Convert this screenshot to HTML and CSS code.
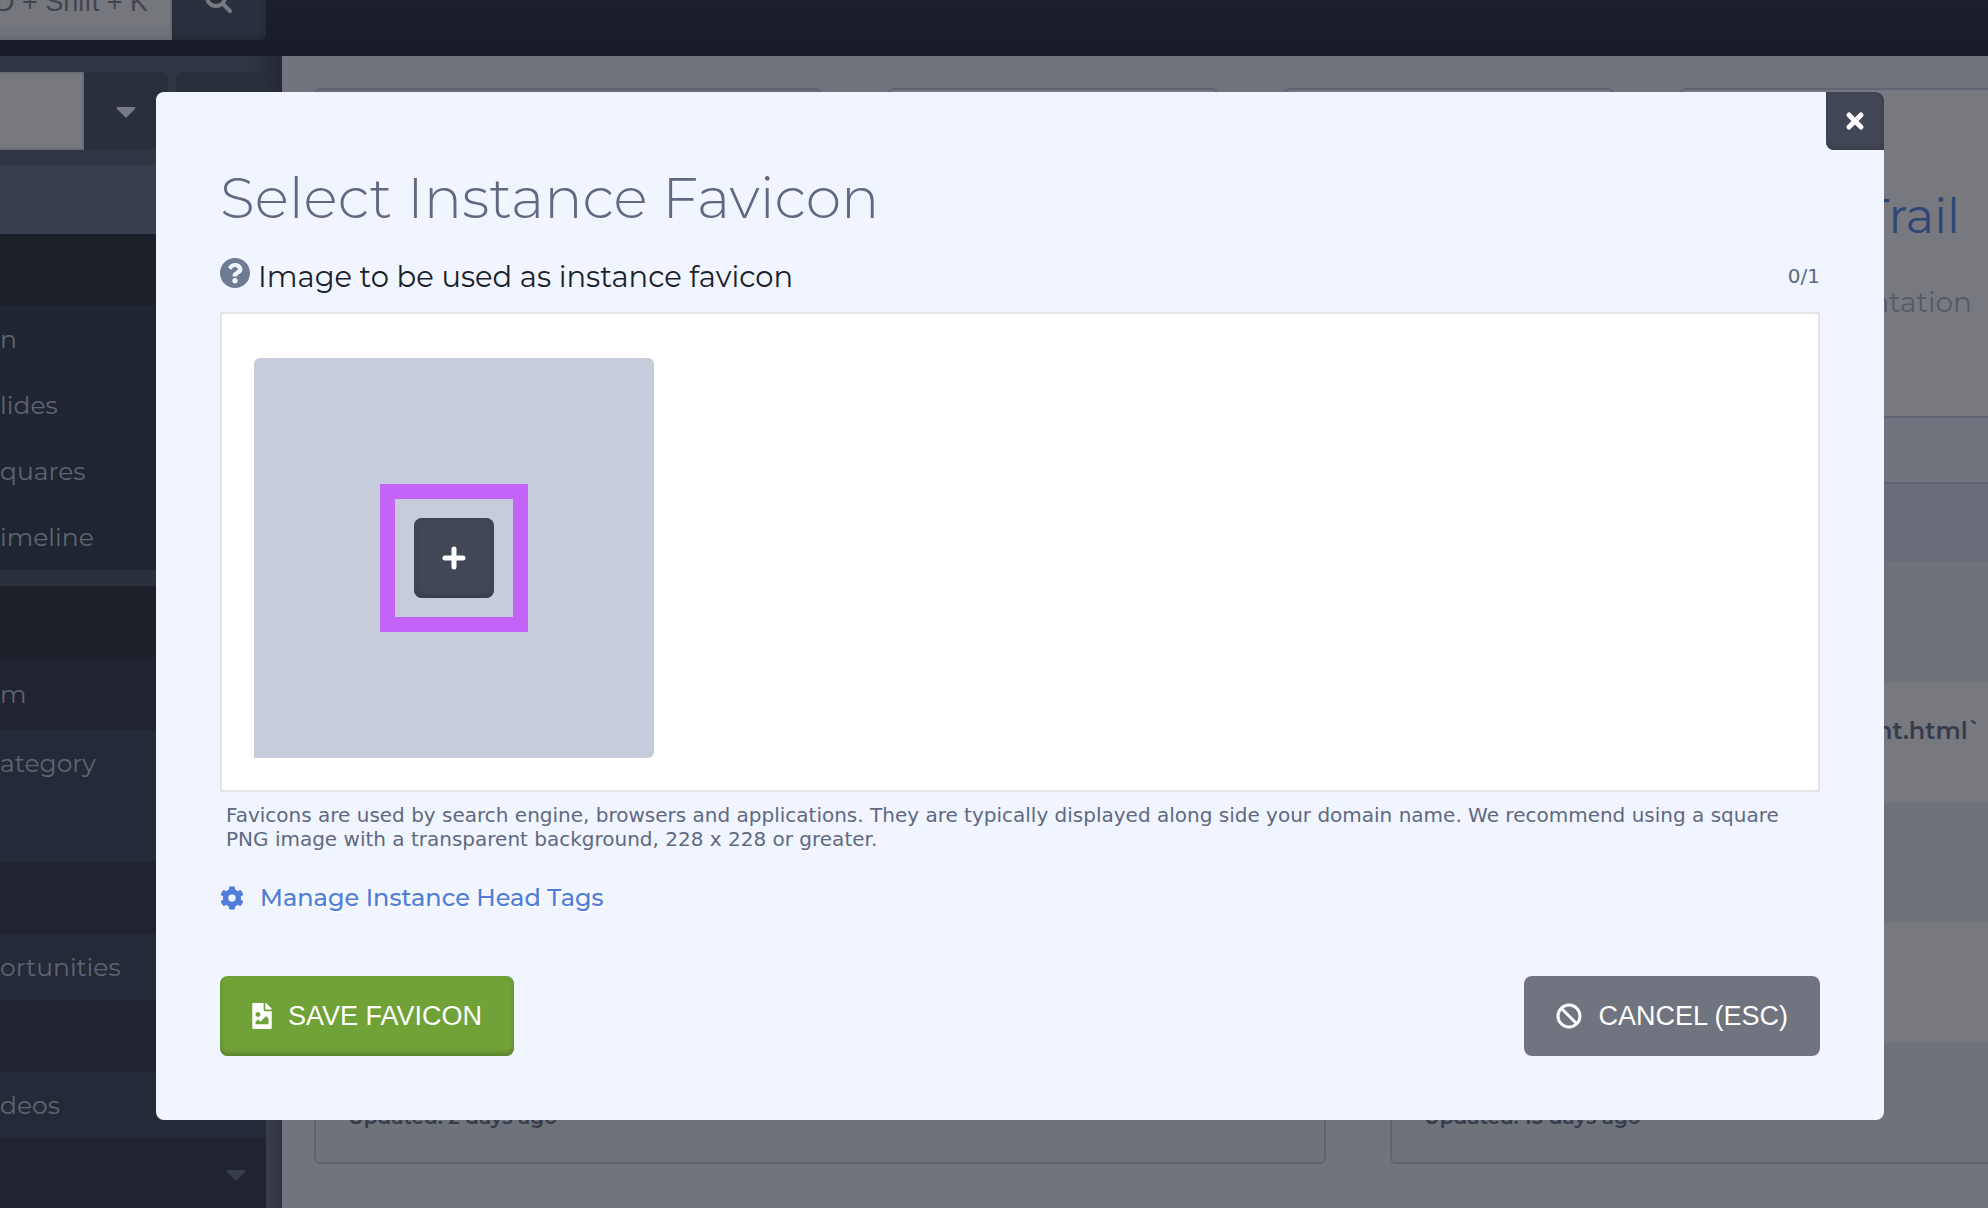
FILE: index.html
```html
<!DOCTYPE html>
<html lang="en">
<head>
<meta charset="utf-8">
<title>Select Instance Favicon</title>
<link rel="stylesheet" href="styles.css">
</head>
<body>
<div class="app">
  <header class="topbar">
    <input class="search" type="text" value="D + Shift + K" aria-label="Search">
    <button class="search-button" type="button" aria-label="Search">
      <svg width="28" height="28" viewBox="0 0 28 28" fill="none" stroke="currentColor" stroke-width="4" stroke-linecap="round"><circle cx="11" cy="11" r="9"/><path d="M18 18l7 7"/></svg>
    </button>
  </header>
  <div class="workspace">
    <nav class="sidebar">
      <div class="filter">
        <input class="filter-input" type="text" aria-label="Filter">
        <button class="filter-toggle" type="button" aria-label="Filter options"><svg width="20" height="12" viewBox="0 0 20 12" fill="currentColor"><path d="M2 0h16q2 0 1 2l-8 8q-1 1-2 0L1 2Q0 0 2 0z"/></svg></button>
        <button class="filter-extra" type="button" aria-label="Add"></button>
      </div>
      <div class="band current"></div>
      <div class="band heading"></div>
      <ul class="menu">
        <li><a href="#">n</a></li>
        <li><a href="#">lides</a></li>
        <li><a href="#">quares</a></li>
        <li><a href="#">imeline</a></li>
      </ul>
      <div class="band divider"></div>
      <div class="band heading"></div>
      <ul class="menu">
        <li class="tall"><a href="#">m</a></li>
        <li class="raised"><a href="#">ategory</a></li>
        <li class="raised"></li>
        <li class="tall"></li>
        <li class="raised"><a href="#">ortunities</a></li>
        <li class="tall"></li>
        <li class="raised"><a href="#">deos</a></li>
        <li class="tall more"><svg width="20" height="12" viewBox="0 0 20 12" fill="currentColor"><path d="M2 0h16q2 0 1 2l-8 8q-1 1-2 0L1 2Q0 0 2 0z"/></svg></li>
      </ul>
    </nav>
    <main class="content">
      <div class="tiles">
        <section class="card shaded"></section>
        <section class="card"></section>
        <section class="card"></section>
        <section class="card">
          <a class="card-title" href="#">Audit Trail</a>
          <p class="card-text">Documentation</p>
        </section>
      </div>
      <div class="logs">
        <section class="card log">
          <div class="log-head"></div>
          <div class="log-row"></div>
          <div class="log-row"></div>
          <div class="log-row"></div>
          <div class="log-row"></div>
          <div class="log-row last">Updated: 2 days ago</div>
        </section>
        <section class="card log open">
          <div class="log-head"></div>
          <div class="log-row"></div>
          <div class="log-row file">nt.html`</div>
          <div class="log-row"></div>
          <div class="log-row"></div>
          <div class="log-row last">Updated: 13 days ago</div>
        </section>
      </div>
    </main>
  </div>
</div>

<div class="modal" role="dialog" aria-labelledby="modal-title">
  <button class="close" type="button" aria-label="Close">
    <svg width="20" height="20" viewBox="0 0 20 20" fill="none" stroke="currentColor" stroke-width="5" stroke-linecap="round"><path d="M4 4l12 12M16 4L4 16"/></svg>
  </button>
  <h1 id="modal-title">Select Instance Favicon</h1>
  <div class="field-head">
    <svg class="help" width="30" height="30" viewBox="8 8 496 496" fill="currentColor"><path d="M504 256c0 136.997-111.043 248-248 248S8 392.997 8 256C8 119.083 119.043 8 256 8s248 111.083 248 248zM262.655 90c-54.497 0-89.255 22.957-116.549 63.758-3.536 5.286-2.353 12.415 2.715 16.258l34.699 26.31c5.205 3.947 12.621 3.008 16.665-2.122 17.864-22.658 30.113-35.797 57.303-35.797 20.429 0 45.698 13.148 45.698 32.958 0 14.976-12.363 22.667-32.534 33.976C247.128 238.528 216 254.941 216 296v4c0 6.627 5.373 12 12 12h56c6.627 0 12-5.373 12-12v-1.333c0-28.462 83.186-29.647 83.186-106.667 0-58.002-60.165-102-116.531-102zM256 338c-25.365 0-46 20.635-46 46 0 25.364 20.635 46 46 46s46-20.636 46-46c0-25.365-20.635-46-46-46z"/></svg>
    <span class="field-label">Image to be used as instance favicon</span>
    <span class="count">0/1</span>
  </div>
  <div class="picker">
    <div class="slot">
      <div class="highlight">
        <button class="add" type="button" aria-label="Add image">
          <svg width="24" height="24" viewBox="0 0 24 24" fill="none" stroke="currentColor" stroke-width="5" stroke-linecap="round"><path d="M12 3v18M3 12h18"/></svg>
        </button>
      </div>
    </div>
  </div>
  <p class="hint">Favicons are used by search engine, browsers and applications. They are typically displayed along side your domain name. We recommend using a square PNG image with a transparent background, 228 x 228 or greater.</p>
  <a class="manage" href="#">
    <svg width="24" height="24" viewBox="0 0 512 512" fill="currentColor"><path d="M487.400 315.700l-42.600-24.600c4.300-23.200 4.300-47 0-70.200l42.600-24.600c4.900-2.800 7.100-8.600 5.500-14-11.100-35.600-30-67.800-54.700-94.600-3.800-4.100-10-5.100-14.800-2.300L380.800 110c-17.900-15.400-38.500-27.300-60.800-35.100V25.800c0-5.600-3.900-10.500-9.400-11.700-36.700-8.200-74.300-7.800-109.200 0-5.500 1.200-9.400 6.100-9.400 11.700V75c-22.200 7.900-42.800 19.800-60.800 35.100L88.700 85.500c-4.900-2.800-11-1.900-14.800 2.300-24.700 26.700-43.600 58.900-54.700 94.600-1.700 5.400.6 11.200 5.500 14L67.300 221c-4.300 23.200-4.300 47 0 70.200l-42.600 24.600c-4.900 2.800-7.100 8.600-5.500 14 11.100 35.600 30 67.800 54.700 94.600 3.800 4.100 10 5.100 14.800 2.300l42.600-24.600c17.900 15.400 38.500 27.300 60.800 35.100v49.200c0 5.600 3.900 10.500 9.400 11.700 36.700 8.200 74.300 7.800 109.200 0 5.500-1.200 9.400-6.100 9.400-11.700v-49.200c22.200-7.900 42.800-19.800 60.800-35.100l42.600 24.600c4.900 2.800 11 1.900 14.800-2.300 24.700-26.700 43.600-58.900 54.700-94.600 1.500-5.500-.7-11.300-5.600-14.100zM256 336c-44.100 0-80-35.900-80-80s35.900-80 80-80 80 35.900 80 80-35.900 80-80 80z"/></svg>
    <span>Manage Instance Head Tags</span>
  </a>
  <div class="actions">
    <button class="button save" type="button">
      <svg width="20" height="26" viewBox="0 0 384 512" fill="currentColor"><path d="M384 121.941V128H256V0h6.059a24 24 0 0 1 16.970 7.029l97.941 97.941a24.002 24.002 0 0 1 7.030 16.971zM248 160c-13.200 0-24-10.800-24-24V0H24C10.745 0 0 10.745 0 24v464c0 13.255 10.745 24 24 24h336c13.255 0 24-10.745 24-24V160H248zm-135.455 16c26.510 0 48 21.490 48 48s-21.490 48-48 48-48-21.490-48-48 21.491-48 48-48zm208 240h-256l.485-48.485L104.545 328c4.686-4.686 11.799-4.201 16.485.485L160.545 368 264.060 264.485c4.686-4.686 12.284-4.686 16.971 0L320.545 304v112z"/></svg>
      SAVE FAVICON
    </button>
    <button class="button cancel" type="button">
      <svg width="26" height="26" viewBox="0 0 26 26" fill="none" stroke="currentColor" stroke-width="3"><circle cx="13" cy="13" r="11"/><path d="M5 5l16 16"/></svg>
      CANCEL (ESC)
    </button>
  </div>
</div>
</body>
</html>
```

FILE: styles.css
```css
* { box-sizing: border-box; }

body {
  margin: 0;
  overflow: hidden;
  background: #70747c;
  font-family: Montserrat, Inter, sans-serif;
}

button, input { border: 0; margin: 0; padding: 0; font: inherit; }
button { display: flex; align-items: center; justify-content: center; cursor: pointer; }
svg { display: block; flex: none; }
a { text-decoration: none; }
ul, p, h1 { margin: 0; padding: 0; }

.app { display: flex; flex-direction: column; height: 100vh; }

/* Top bar */
.topbar {
  display: flex;
  align-items: flex-end;
  height: 56px;
  padding-bottom: 16px;
  overflow: hidden;
  background: linear-gradient(#1c202b, #181c26);
}
.search {
  width: 212px;
  height: 80px;
  margin-left: -40px;
  padding: 4px 22px 0 0;
  border: 2px solid #666a70;
  background: linear-gradient(#75777d 80%, #6b6e75);
  color: #42454d;
  font-family: "Liberation Sans", Arial, sans-serif;
  font-size: 27px;
  text-align: right;
}
.search-button {
  width: 94px;
  height: 80px;
  border-radius: 0 6px 6px 0;
  background: #2b303e;
  box-shadow: inset 0 -2px 6px #232733;
  color: #777a80;
}

/* Sidebar */
.workspace { display: flex; flex: 1; min-height: 0; }
.sidebar {
  flex: none;
  width: 282px;
  padding-right: 16px;
  overflow: hidden;
  background: linear-gradient(90deg, transparent 244px, #1d212c99), linear-gradient(#313644 110px, #4b4e5b 110px);
}
.filter {
  display: flex;
  height: 110px;
  padding: 16px 0;
}
.filter-input { width: 84px; border: 2px solid #6a6e74; border-left: 0; background: #77797f; }
.filter-toggle {
  width: 84px;
  margin-right: 8px;
  padding-top: 4px;
  border-radius: 0 6px 6px 0;
  background: #2a2f3c;
  color: #777a80;
}
.filter-extra { flex: 1; border-radius: 6px; background: #2a2f3c; }
.band.current { height: 68px; background: #373e4d; }
.band.heading { height: 72px; background: #1c2029; }
.band.divider { height: 16px; background: #2b303d; }
.menu { list-style: none; background: #202532; }
.menu li { display: flex; align-items: center; height: 66px; }
.menu .tall { height: 72px; background: #1f2430; }
.menu .raised { background: #242a37; }
.menu a { color: #5f6471; font-size: 25px; }
.menu .more { justify-content: flex-end; padding: 4px 20px 0 0; color: #373c4a; }

/* Page content behind the dialog */
.content {
  display: flex;
  flex: 1;
  flex-direction: column;
  gap: 64px;
  min-width: 0;
  padding: 32px 0 44px 32px;
  overflow: hidden;
}
.tiles {
  display: grid;
  grid-template-columns: 508fr 330fr 330fr 330fr;
  gap: 66px;
  height: 330px;
  margin-right: -22px;
}
.card {
  overflow: hidden;
  border: 2px solid #606472;
  border-radius: 6px;
  background: #77797f;
  text-align: right;
}
.card.shaded { background: #6a6d78; }
.card-title { display: block; margin: 94px 48px 0 0; color: #304676; font-size: 48px; line-height: 64px; }
.card-text { margin: 34px 36px 0 0; color: #555a67; font-size: 28px; line-height: 40px; }
.logs { display: grid; grid-template-columns: 1012fr 598fr; gap: 64px; }
.log { text-align: left; }
.log.open { border-right: 0; border-radius: 6px 0 0 6px; }
.log-head { height: 78px; background: #6a6d78; }
.log-row { height: 120px; padding: 0 32px; color: #363c4c; font-size: 20px; font-weight: 600; }
.log-row:nth-child(even) { background: #6e7279; }
.log-row.last { padding-top: 62px; line-height: 26px; }
.log-row.file { padding: 32px 6px; font-size: 24px; line-height: 34px; text-align: right; }

/* Dialog */
.modal {
  position: fixed;
  top: 92px;
  left: 156px;
  right: 104px;
  padding: 72px 64px 64px;
  border-radius: 8px;
  background: #f0f5ff;
}
.close {
  position: absolute;
  top: 0;
  right: 0;
  width: 58px;
  height: 58px;
  border-radius: 0 8px 0 8px;
  background: #424757;
  box-shadow: inset 0 -2px 6px #363b49;
  color: #fff;
}
h1 { color: #606981; font-size: 57px; font-weight: 300; line-height: 68px; }
.field-head {
  display: flex;
  align-items: center;
  height: 40px;
  margin: 24px 0 16px;
  color: #6f7b93;
}
.help { margin-bottom: 6px; }
.field-label { flex: 1; margin-left: 8px; color: #1b1f2a; font-size: 29px; }
.count, .hint {
  color: #606981;
  font-family: Verdana, "DejaVu Sans", sans-serif;
  font-size: 20px;
  line-height: 24px;
}
.picker { padding: 44px 32px 32px; border: 2px solid #e2e4e8; background: #fff; }
.slot {
  display: flex;
  align-items: center;
  justify-content: center;
  width: 400px;
  height: 400px;
  border-radius: 6px 6px 6px 0;
  background: #c6ccdc;
}
.highlight { padding: 19px; border: 15px solid #c463f7; }
.add {
  width: 80px;
  height: 80px;
  border-radius: 8px;
  background: #424757;
  box-shadow: inset 0 -2px 6px #363b49;
  color: #fff;
}
.hint { margin: 11px 6px 31px; }
.manage {
  display: flex;
  align-items: center;
  gap: 16px;
  width: fit-content;
  color: #4f7dd9;
  font-size: 24px;
  font-weight: 500;
  line-height: 32px;
  text-shadow: 2px 2px 0 #fff;
}
.actions { display: flex; justify-content: space-between; margin-top: 62px; }
.button {
  gap: 16px;
  height: 80px;
  padding: 0 32px;
  border-radius: 8px;
  color: #fff;
  font-family: "Liberation Sans", Arial, sans-serif;
  font-size: 27px;
}
.save { background: #71a238; box-shadow: inset 0 -3px 5px #5a812f; }
.cancel { background: #70747f; }
```
